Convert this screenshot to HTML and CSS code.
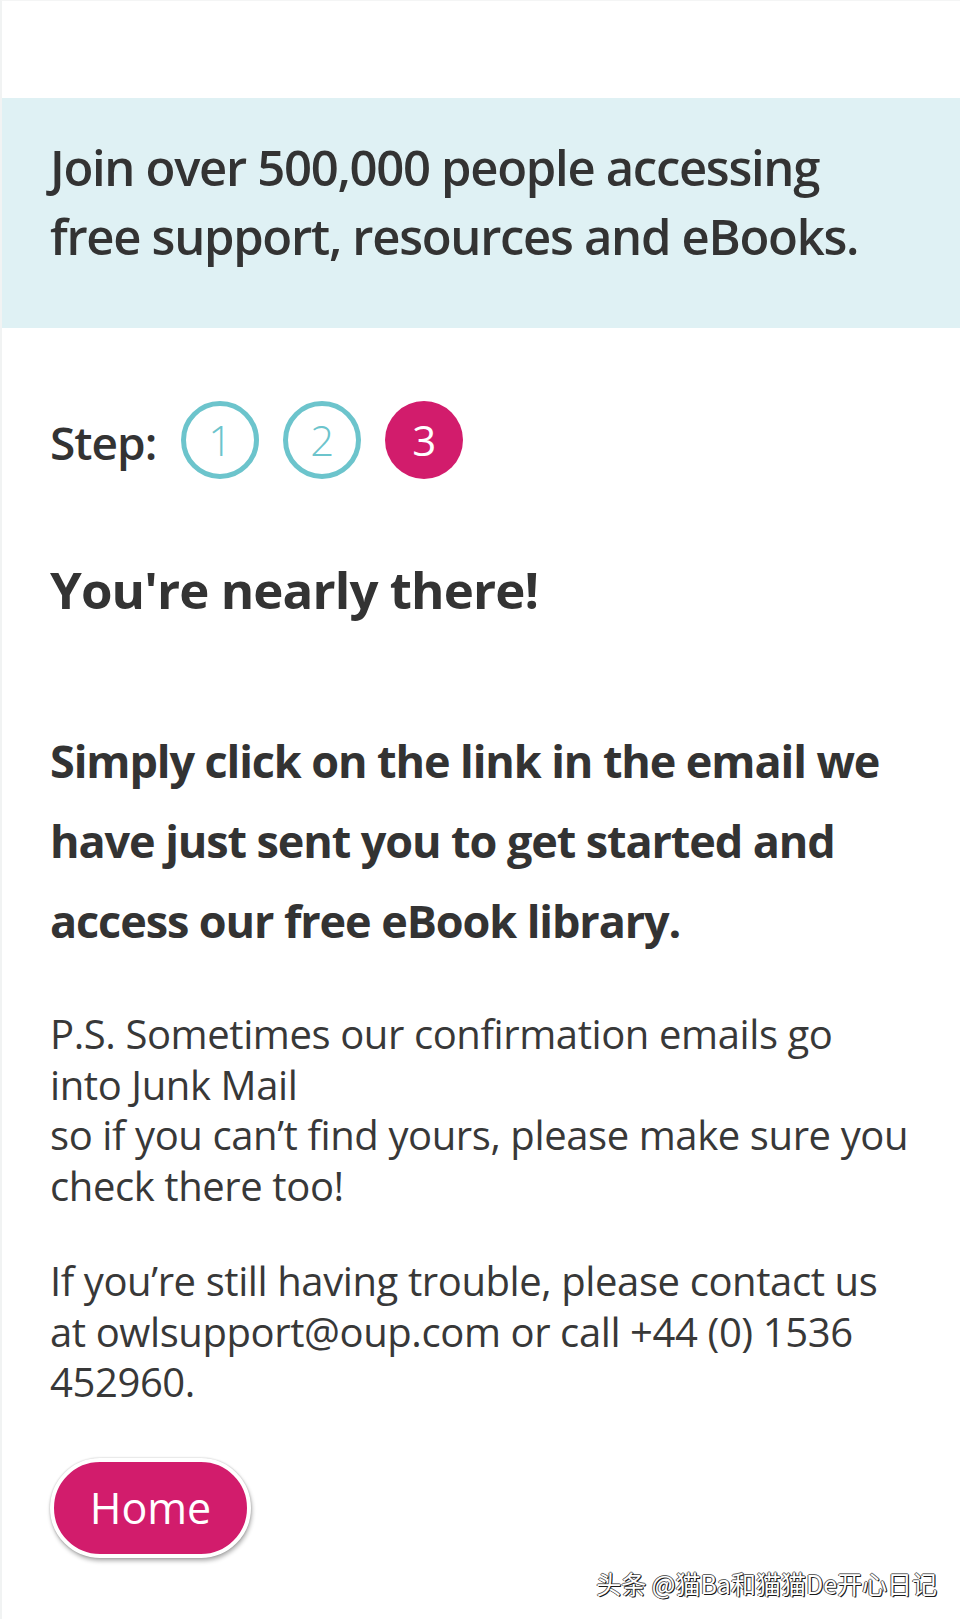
FILE: index.html
```html
<!DOCTYPE html>
<html lang="en">
<head>
<meta charset="utf-8">
<title>You're nearly there!</title>
<link rel="stylesheet" href="styles.css">
</head>
<body>
<div class="page">
  <div class="banner">
    <p class="banner-text">Join over 500,000 people accessing free support, resources and eBooks.</p>
  </div>
  <main class="content">
    <div class="steps">
      <span class="step-label">Step:</span>
      <span class="step done">1</span>
      <span class="step done">2</span>
      <span class="step current">3</span>
    </div>
    <h1 class="title">You're nearly there!</h1>
    <p class="lead">Simply click on the link in the email we have just sent you to get started and access our free eBook library.</p>
    <p class="note">P.S. Sometimes our confirmation emails go<br>into Junk Mail<br>so if you can’t find yours, please make sure you<br>check there too!</p>
    <p class="note contact">If you’re still having trouble, please contact us<br>at owlsupport@oup.com or call +44 (0) 1536<br>452960.</p>
    <a class="home-btn" href="#">Home</a>
  </main>
  <div class="watermark">头条 @猫Ba和猫猫De开心日记</div>
</div>
</body>
</html>
```
FILE: styles.css
```css
html, body {
  margin: 0;
  padding: 0;
  background: #ffffff;
}
body {
  font-family: "Open Sans", "Noto Sans", sans-serif;
  color: #333333;
}
.page {
  width: 960px;
  min-height: 1619px;
  box-sizing: border-box;
  border-left: 2px solid #f1f3f3;
  border-top: 1px solid #f4f5f5;
  padding-top: 97px;
  position: relative;
}
.banner {
  background: #dff1f4;
  height: 230px;
  box-sizing: border-box;
  padding: 35px 50px 0 48px;
}
.banner-text {
  margin: 0;
  font-size: 49px;
  line-height: 69px;
  font-weight: 600;
  letter-spacing: -1.3px;
  color: #333333;
  width: 825px;
}
.content {
  padding: 0 50px 0 48px;
  width: 860px;
}
.steps {
  display: flex;
  align-items: center;
  margin-top: 73px;
  height: 78px;
}
.step-label {
  font-size: 46px;
  font-weight: 600;
  letter-spacing: -1px;
  margin-right: 25px;
  line-height: 78px;
  position: relative;
  top: 2px;
}
.step {
  width: 78px;
  height: 78px;
  box-sizing: border-box;
  border-radius: 50%;
  display: flex;
  align-items: center;
  justify-content: center;
  font-size: 42px;
  font-weight: 300;
  margin-right: 24px;
  line-height: 1;
}
.step.done {
  border: 5px solid #6cc4cc;
  color: #6cc4cc;
}
.step.current {
  background: #d21c6c;
  color: #ffffff;
  font-weight: 400;
}
.title {
  margin: 80px 0 0;
  font-size: 51px;
  line-height: 60px;
  font-weight: 700;
  letter-spacing: -0.9px;
}
.lead {
  margin: 102px 0 0;
  font-size: 45px;
  line-height: 80px;
  font-weight: 700;
  letter-spacing: -1.1px;
}
.note {
  margin: 48px 0 0;
  font-size: 40px;
  line-height: 50.7px;
  font-weight: 400;
  letter-spacing: -0.4px;
  white-space: nowrap;
  color: #383838;
}
.note.contact {
  margin-top: 44px;
}
.home-btn {
  display: inline-flex;
  align-items: center;
  justify-content: center;
  margin-top: 50px;
  width: 201px;
  height: 100px;
  box-sizing: border-box;
  border: 4px solid #ffffff;
  border-radius: 50px;
  background: #d21c6c;
  color: #ffffff;
  font-size: 43px;
  text-decoration: none;
  box-shadow: 1px 3px 4px rgba(0, 0, 0, 0.3), 0 0 2px rgba(0, 0, 0, 0.25);
}
.watermark {
  position: absolute;
  right: 23px;
  top: 1566px;
  font-family: "Noto Sans CJK SC", sans-serif;
  font-size: 25px;
  line-height: 32px;
  color: #ffffff;
  text-shadow: 1px 1px 0 #1a1a1a, -1px 0 0 #555555, 0 -1px 0 #666666, 1px 0 0 #333333;
}
```
